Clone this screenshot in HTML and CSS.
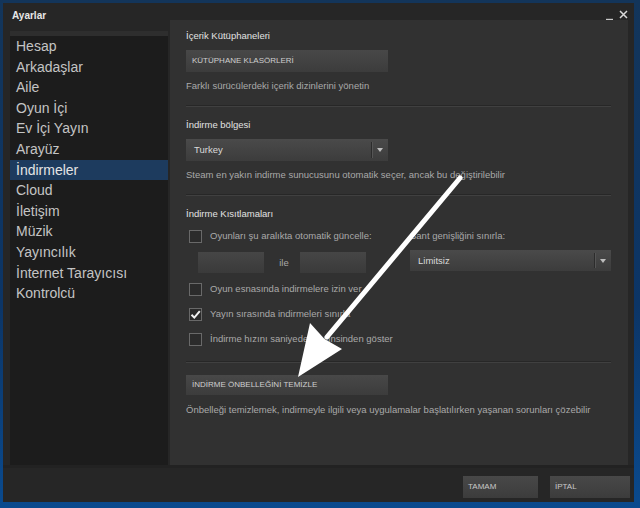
FILE: index.html
```html
<!DOCTYPE html>
<html lang="tr">
<head>
<meta charset="utf-8">
<title>Ayarlar</title>
<link rel="stylesheet" href="styles.css">
</head>
<body>
<div class="window">
  <div class="main">
    <div class="left">
      <div class="title">Ayarlar</div>
      <div class="sidebar">
        <div class="side-top"></div>
        <ul class="nav">
          <li>Hesap</li>
          <li>Arkadaşlar</li>
          <li>Aile</li>
          <li>Oyun İçi</li>
          <li>Ev İçi Yayın</li>
          <li>Arayüz</li>
          <li class="active">İndirmeler</li>
          <li>Cloud</li>
          <li>İletişim</li>
          <li>Müzik</li>
          <li>Yayıncılık</li>
          <li>İnternet Tarayıcısı</li>
          <li>Kontrolcü</li>
        </ul>
      </div>
    </div>
    <div class="right">
      <div class="controls">
        <svg class="ctl" width="30" height="14" viewBox="0 0 30 14">
          <path d="M3 11.5H10" stroke="#c8c8c8" stroke-width="1.4"/>
          <path d="M17 3L24 10M24 3L17 10" stroke="#d8d8d8" stroke-width="1.5"/>
        </svg>
      </div>
      <div class="panel">
        <div class="heading first">İçerik Kütüphaneleri</div>
        <div class="btn wide">KÜTÜPHANE KLASÖRLERİ</div>
        <div class="desc">Farklı sürücülerdeki içerik dizinlerini yönetin</div>
        <div class="sep"></div>

        <div class="heading">İndirme bölgesi</div>
        <div class="select region"><span class="sel-text">Turkey</span><span class="sel-arrow"></span></div>
        <div class="desc">Steam en yakın indirme sunucusunu otomatik seçer, ancak bu değiştirilebilir</div>
        <div class="sep"></div>

        <div class="heading">İndirme Kısıtlamaları</div>
        <div class="limits">
          <div class="lim-left">
            <div class="check-row top"><span class="box"></span><span class="lbl">Oyunları şu aralıkta otomatik güncelle:</span></div>
            <div class="range">
              <div class="field"></div>
              <span class="ile">ile</span>
              <div class="field"></div>
            </div>
          </div>
          <div class="lim-right">
            <div class="lbl-bw">Bant genişliğini sınırla:</div>
            <div class="select bw"><span class="sel-text">Limitsiz</span><span class="sel-arrow"></span></div>
          </div>
        </div>
        <div class="check-row r1"><span class="box"></span><span class="lbl">Oyun esnasında indirmelere izin ver</span></div>
        <div class="check-row r2"><span class="box checked"><svg width="11" height="11" viewBox="0 0 11 11"><path d="M1.5 5.8L4.3 8.6L9.8 2.2" fill="none" stroke="#f2f2f2" stroke-width="2"/></svg></span><span class="lbl">Yayın sırasında indirmeleri sınırla</span></div>
        <div class="check-row r3"><span class="box"></span><span class="lbl">İndirme hızını saniyede bit cinsinden göster</span></div>
        <div class="sep last"></div>

        <div class="btn wide short">İNDİRME ÖNBELLEĞİNİ TEMİZLE</div>
        <div class="desc">Önbelleği temizlemek, indirmeyle ilgili veya uygulamalar başlatılırken yaşanan sorunları çözebilir</div>
      </div>
    </div>
  </div>
  <div class="footer">
    <div class="btn foot ok">TAMAM</div>
    <div class="btn foot cancel">İPTAL</div>
  </div>
</div>
<svg class="arrow" width="640" height="508" viewBox="0 0 640 508">
  <path d="M460 178L327 337" stroke="#ffffff" stroke-width="5" stroke-linecap="round"/>
  <path d="M298 377L310 323L324.5 339L342 349Z" fill="#ffffff"/>
</svg>
</body>
</html>
```
FILE: styles.css
```css
* { box-sizing: border-box; }
html, body { margin: 0; padding: 0; }
body {
  width: 640px;
  height: 508px;
  overflow: hidden;
  background: linear-gradient(180deg, #13355a 0%, #0c3566 60%, #0a4a8e 100%);
  font-family: "Liberation Sans", Arial, sans-serif;
  position: relative;
}
.window {
  margin: 3px 0 0 3px;
  width: 631px;
  height: 499px;
  background: #262626;
  display: flex;
  flex-direction: column;
}
.main {
  display: flex;
  height: 462px;
}
.left {
  width: 167px;
  padding-left: 7px;
  display: flex;
  flex-direction: column;
}
.title {
  height: 28px;
  padding: 7px 0 0 2px;
  line-height: 12px;
  font-size: 10px;
  font-weight: bold;
  color: #e8e8e8;
}
.sidebar {
  width: 158px;
  flex: 1;
  background: #1c1c1c;
  display: flex;
  flex-direction: column;
}
.side-top {
  height: 5px;
  background: #2e2e2e;
}
.nav {
  list-style: none;
  margin: 0;
  padding: 0;
}
.nav li {
  height: 20.6px;
  line-height: 21.4px;
  font-size: 14px;
  color: #c4c4c4;
  padding-left: 6px;
}
.nav li.active {
  background: #1d3b5e;
  color: #e4e4e4;
}
.right {
  flex: 1;
  display: flex;
  flex-direction: column;
}
.controls {
  height: 17px;
  display: flex;
  justify-content: flex-end;
  align-items: flex-end;
  padding-right: 1px;
}
.ctl { display: block; margin-bottom: -2px; }
.panel {
  flex: 1;
  margin-right: 6px;
  background: #313131;
  padding: 0 17px 0 16px;
  font-size: 9.5px;
  color: #a9a9a9;
}
.heading {
  height: 14px;
  line-height: 14px;
  margin-top: 11px;
  color: #e2e2e2;
}
.heading.first { margin-top: 9px; }
.btn {
  background: linear-gradient(180deg, #484848, #3c3c3c);
  color: #cfcfcf;
  font-size: 8px;
}
.btn.wide {
  width: 202px;
  height: 22px;
  line-height: 22px;
  margin-top: 7px;
  padding-left: 6px;
}
.btn.short { height: 20px; line-height: 20px; margin-top: 12px; }
.desc {
  height: 14px;
  line-height: 14px;
  margin-top: 7px;
  white-space: nowrap;
}
.btn.short + .desc { margin-top: 8px; }
.sep {
  height: 2px;
  margin-top: 12px;
  border-top: 1px solid #272727;
  border-bottom: 1px solid #404040;
}
.sep.last { margin-top: 15px; }
.select {
  position: relative;
  height: 22px;
  line-height: 22px;
  background: linear-gradient(180deg, #4a4a4a, #3c3c3c);
  color: #dadada;
  padding-left: 8px;
}
.select.region { width: 202px; margin-top: 7px; }
.select.bw { width: 201px; margin-top: 7px; height: 21px; line-height: 21px; }
.sel-arrow {
  position: absolute;
  right: 0;
  top: 3px;
  bottom: 3px;
  width: 17px;
  border-left: 1px solid #2c2c2c;
  box-shadow: inset 1px 0 0 #555;
}
.sel-arrow::after {
  content: "";
  position: absolute;
  left: 5px;
  top: 6px;
  border-left: 3.5px solid transparent;
  border-right: 3.5px solid transparent;
  border-top: 4px solid #bdbdbd;
}
.limits {
  display: flex;
}
.lim-left { width: 224px; }
.lim-right { padding-top: 8px; }
.lbl-bw { height: 14px; line-height: 14px; }
.check-row {
  display: flex;
  align-items: center;
  height: 14px;
  margin-top: 11px;
  padding-left: 3px;
}
.check-row.top { margin-top: 8px; }
.check-row.r1 { margin-top: 9px; }
.check-row.r2 { margin-top: 11px; }
.check-row.r3 { margin-top: 11px; }
.box {
  width: 13px;
  height: 13px;
  border: 1px solid #696969;
  background: #2b2b2b;
  margin-right: 8px;
  display: flex;
  align-items: center;
  justify-content: center;
  flex: none;
}
.box svg { display: block; }
.lbl { line-height: 14px; white-space: nowrap; }
.range {
  display: flex;
  align-items: center;
  margin-top: 9px;
  padding-left: 12px;
}
.field {
  width: 66px;
  height: 21px;
  background: linear-gradient(180deg, #464646, #3a3a3a);
}
.ile {
  width: 36px;
  padding-left: 4px;
  text-align: center;
  color: #a9a9a9;
}
.footer {
  flex: 1;
  display: flex;
  justify-content: flex-end;
  gap: 12px;
  padding: 8px 4px 0 0;
  border-top: 3px solid #222;
}
.btn.foot {
  height: 22px;
  line-height: 22px;
  padding-left: 5px;
  color: #c8c8c8;
}
.btn.ok { width: 75px; }
.btn.cancel { width: 80px; }
.arrow {
  position: absolute;
  left: 0;
  top: 0;
  pointer-events: none;
}
```
